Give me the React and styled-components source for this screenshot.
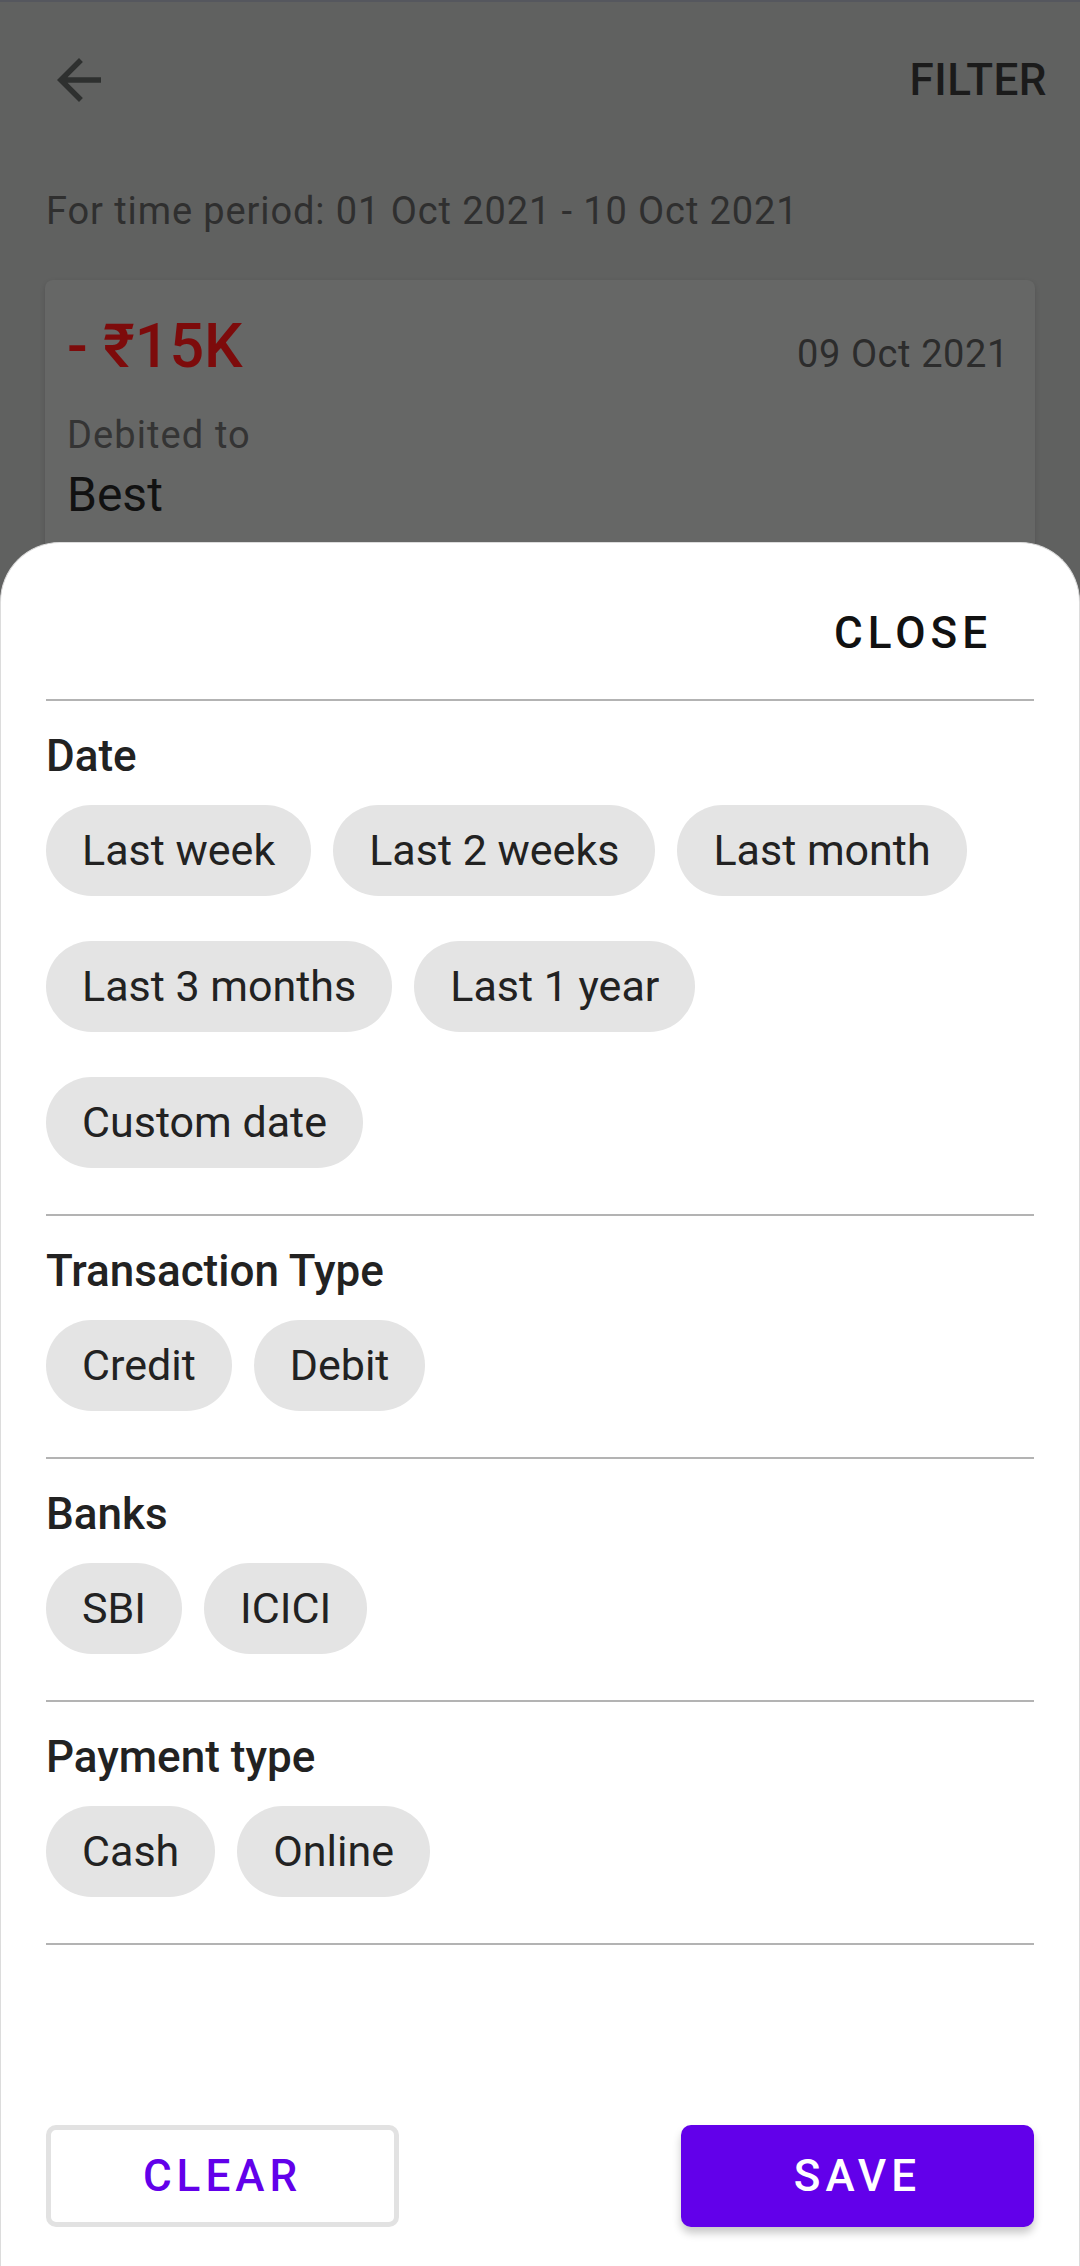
import styled, { createGlobalStyle } from "styled-components";

const GlobalStyle = createGlobalStyle`
  body {
    margin: 0;
    font-family: Roboto, "Noto Sans", sans-serif;
  }
  * {
    box-sizing: border-box;
  }
`;

const filterGroups = [
  {
    title: "Date",
    options: [
      "Last week",
      "Last 2 weeks",
      "Last month",
      "Last 3 months",
      "Last 1 year",
      "Custom date",
    ],
  },
  { title: "Transaction Type", options: ["Credit", "Debit"] },
  { title: "Banks", options: ["SBI", "ICICI"] },
  { title: "Payment type", options: ["Cash", "Online"] },
];

function BackArrow() {
  return (
    <svg width="66" height="66" viewBox="0 0 24 24" fill="#2e302f">
      <path d="M20 11H7.83l5.59-5.59L12 4l-8 8 8 8 1.41-1.41L7.83 13H20v-2z" />
    </svg>
  );
}

function App() {
  return (
    <>
      <GlobalStyle />
      <Screen>
        <TopBar>
          <IconButton>
            <BackArrow />
          </IconButton>
          <Title>FILTER</Title>
        </TopBar>
        <Period>For time period: 01 Oct 2021 - 10 Oct 2021</Period>
        <Card>
          <AmountRow>
            <Amount>- ₹15K</Amount>
            <TxnDate>09 Oct 2021</TxnDate>
          </AmountRow>
          <Label>Debited to</Label>
          <Payee>Best</Payee>
        </Card>

        <Sheet>
          <CloseRow>
            <CloseButton>CLOSE</CloseButton>
          </CloseRow>
          {filterGroups.map((group) => (
            <Section key={group.title}>
              <Heading>{group.title}</Heading>
              <ChipWrap>
                {group.options.map((option) => (
                  <Chip key={option}>{option}</Chip>
                ))}
              </ChipWrap>
            </Section>
          ))}
          <Divider />
          <Footer>
            <ActionButton $variant="outline">CLEAR</ActionButton>
            <ActionButton $variant="filled">SAVE</ActionButton>
          </Footer>
        </Sheet>
      </Screen>
    </>
  );
}

const Screen = styled.div`
  position: relative;
  width: 1080px;
  height: 2266px;
  overflow: hidden;
  background: #606160;
  border-top: 2px solid #55575e;
`;

const TopBar = styled.header`
  display: flex;
  align-items: center;
  justify-content: space-between;
  height: 156px;
  padding: 0 33px 0 46px;
`;

const IconButton = styled.div`
  display: flex;
  width: 66px;
  height: 66px;
`;

const Title = styled.h1`
  margin: 0;
  font-size: 44px;
  font-weight: 500;
  color: #1b1b1b;
  letter-spacing: 0.5px;
`;

const Period = styled.p`
  margin: 31px 46px 0;
  font-size: 38px;
  line-height: 44px;
  color: #2f2f2f;
  letter-spacing: 0.9px;
`;

const Card = styled.div`
  margin: 47px 45px 0;
  min-height: 400px;
  padding: 31px 26px 0 22px;
  background: #666766;
  border-radius: 8px;
  box-shadow: 0 2px 5px rgba(0, 0, 0, 0.15);
`;

const AmountRow = styled.div`
  display: flex;
  align-items: baseline;
  justify-content: space-between;
`;

const Amount = styled.span`
  font-size: 61px;
  line-height: 71px;
  font-weight: 500;
  color: #7d0b0b;
`;

const TxnDate = styled.span`
  font-size: 38px;
  color: #2c2c2c;
  letter-spacing: 0.6px;
`;

const Label = styled.div`
  margin-top: 31px;
  font-size: 38px;
  line-height: 45px;
  color: #343434;
  letter-spacing: 1.1px;
`;

const Payee = styled.div`
  margin-top: 9px;
  font-size: 48px;
  line-height: 56px;
  color: #111;
`;

const Sheet = styled.div`
  position: absolute;
  top: 540px;
  left: 0;
  right: 0;
  bottom: 0;
  display: flex;
  flex-direction: column;
  padding: 0 45px 39px;
  background: #fff;
  border: 1px solid #dcdcdc;
  border-bottom: none;
  border-radius: 60px 60px 0 0;
`;

const CloseRow = styled.div`
  display: flex;
  justify-content: flex-end;
  padding-top: 64px;
  margin-bottom: 40px;
`;

const CloseButton = styled.button`
  margin-right: 42px;
  padding: 0;
  border: none;
  background: none;
  font-family: inherit;
  font-size: 44px;
  line-height: 52px;
  font-weight: 500;
  letter-spacing: 5px;
  color: #111;
`;

const Section = styled.section`
  padding: 29px 0 46px;
  border-top: 2px solid #b3b3b3;
`;

const Divider = styled.div`
  height: 2px;
  background: #b3b3b3;
`;

const Heading = styled.h2`
  margin: 0 0 23px;
  font-size: 44px;
  line-height: 52px;
  font-weight: 500;
  color: #222;
`;

const ChipWrap = styled.div`
  display: flex;
  flex-wrap: wrap;
  gap: 45px 22px;
`;

const Chip = styled.button`
  height: 91px;
  padding: 0 36px;
  border: none;
  border-radius: 46px;
  background: #e4e4e4;
  font-family: inherit;
  font-size: 43px;
  line-height: 91px;
  color: #222;
`;

const Footer = styled.div`
  display: flex;
  justify-content: space-between;
  margin-top: auto;
`;

const ActionButton = styled.button`
  width: 353px;
  height: 102px;
  border-radius: 10px;
  font-family: inherit;
  font-size: 44px;
  font-weight: 500;
  letter-spacing: 5px;
  border: ${(p) => (p.$variant === "outline" ? "5px solid #e2e2e2" : "none")};
  background: ${(p) => (p.$variant === "outline" ? "#fff" : "#6200ea")};
  color: ${(p) => (p.$variant === "outline" ? "#6200ea" : "#fff")};
  box-shadow: ${(p) =>
    p.$variant === "outline" ? "none" : "0 6px 8px rgba(0, 0, 0, 0.22)"};
`;

export default App;
